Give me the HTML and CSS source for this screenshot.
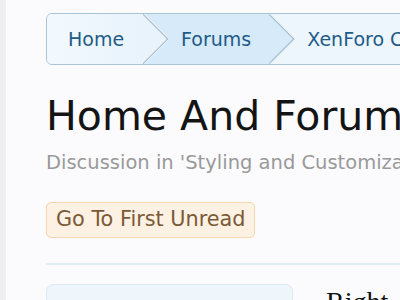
FILE: index.html
```html
<!DOCTYPE html>
<html lang="en">
<head>
<meta charset="utf-8">
<title>Home And Forums</title>
<link rel="stylesheet" href="styles.css">
</head>
<body>
<div class="page">
  <div class="content">
    <nav class="breadcrumb">
      <a class="crumb first" href="#">Home</a>
      <a class="crumb mid" href="#">Forums</a>
      <a class="crumb last" href="#">XenForo Customization</a>
    </nav>
    <h1 class="title">Home And Forums Tabs Styling</h1>
    <p class="subtitle">Discussion in 'Styling and Customization Questions' started by</p>
    <a class="unread" href="#">Go To First Unread</a>
    <div class="divider"></div>
    <div class="row">
      <div class="userbox"></div>
      <div class="msg">Right, so here is the question</div>
    </div>
  </div>
</div>
</body>
</html>
```
FILE: styles.css
```css
html, body {
  margin: 0;
  padding: 0;
  overflow: hidden;
}
body {
  background: #efefef;
  font-family: "DejaVu Sans", sans-serif;
}
.page {
  margin-left: 6px;
  background: #fbfbfd;
  min-height: 300px;
  padding: 13px 0 0 40px;
  width: 1000px;
}
.content {
  width: 900px;
}
.breadcrumb {
  display: flex;
  height: 50px;
  border: 1px solid #a9c4d8;
  border-radius: 6px;
  background: #eef6fc;
  overflow: hidden;
  position: relative;
}
.crumb {
  position: relative;
  display: flex;
  align-items: center;
  font-size: 19px;
  color: #1f5b88;
  text-decoration: none;
  padding: 0 18px 0 38px;
}
.crumb.first {
  padding: 0 19px 0 21px;
  background: linear-gradient(to right, #f3f9fe, #e8f3fb);
}
.crumb.mid {
  background: #d6eaf9;
  padding: 0 18px 0 38px;
}
.crumb.last {
  background: #eef6fd;
  padding-left: 38px;
  flex: 1;
}
.crumb.first::after,
.crumb.mid::after {
  content: "";
  position: absolute;
  z-index: 1;
  top: 7px;
  right: -18px;
  width: 35px;
  height: 35px;
  transform: rotate(45deg);
  border-top: 1px solid #a3b8c8;
  border-right: 1px solid #a3b8c8;
  box-shadow: 1px -1px 0 #e9f2f8;
  clip-path: polygon(-4px -4px, calc(100% + 4px) -4px, calc(100% + 4px) calc(100% + 4px));
}
.crumb.first::after {
  background: #e8f3fb;
}
.crumb.mid::after {
  background: #d6eaf9;
}
.title {
  margin: 27px 0 0;
  font-size: 41px;
  line-height: 48px;
  font-weight: normal;
  color: #141414;
  white-space: nowrap;
}
.subtitle {
  margin: 11px 0 0;
  font-size: 19.5px;
  line-height: 23px;
  color: #999999;
  white-space: nowrap;
}
.unread {
  display: inline-block;
  margin-top: 28px;
  padding: 4px 8px 6px 9px;
  font-size: 20.8px;
  line-height: 24px;
  color: #7a5a36;
  background: #fdf1e3;
  border: 1px solid #f1d6ae;
  border-radius: 5px;
  text-decoration: none;
}
.divider {
  margin-top: 25px;
  border-top: 2px solid #dfecf5;
}
.row {
  display: flex;
  margin-top: 19px;
  gap: 33px;
}
.userbox {
  width: 245px;
  height: 120px;
  background: #eef6fc;
  border: 1px solid #dde9f3;
  border-radius: 7px;
}
.msg {
  font-family: "Liberation Serif", serif;
  font-size: 28px;
  padding-top: 2px;
  color: #111;
}
```
